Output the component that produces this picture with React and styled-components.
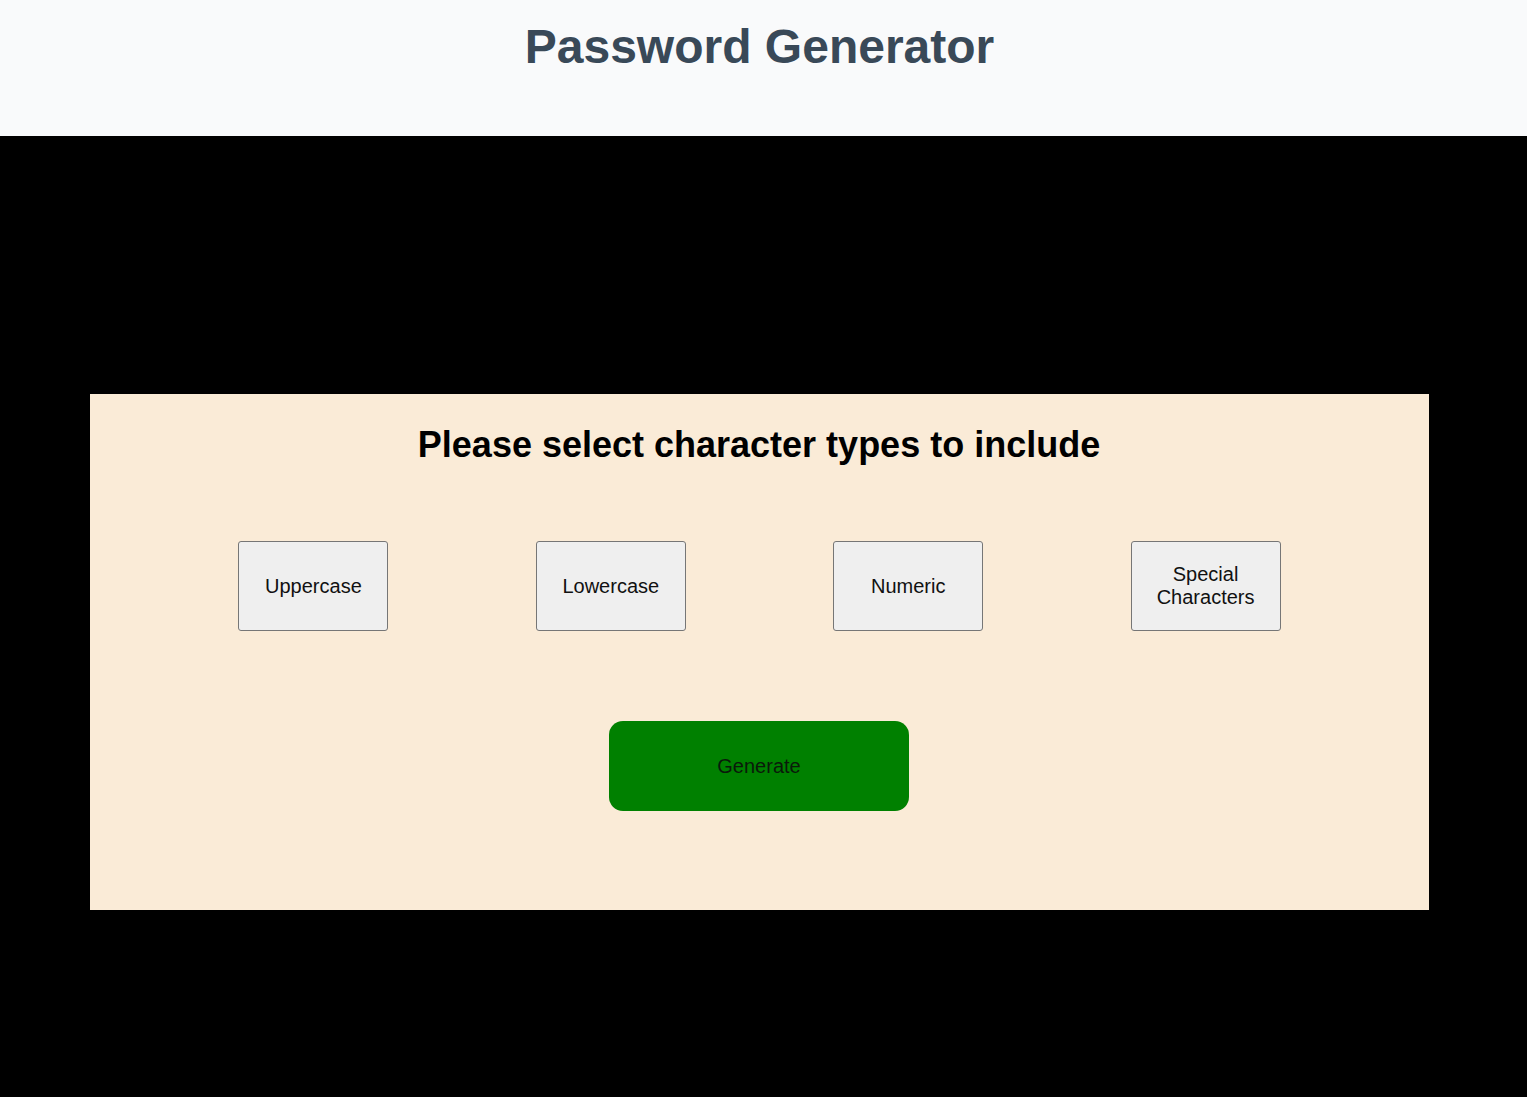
import React from "react";
import styled, { createGlobalStyle } from "styled-components";

const Global = createGlobalStyle`
  html, body { margin: 0; padding: 0; background: #000; }
  body { font-family: "Liberation Sans", Arial, sans-serif; }
  * { box-sizing: border-box; }
`;

const Page = styled.div`
  min-height: 1097px;
  background: #000;
`;

const Header = styled.header`
  height: 136px;
  background: #f9fafb;
  padding: 19px 8px 0 0;
  text-align: center;
`;

const Title = styled.h1`
  margin: 0;
  font-size: 48px;
  font-weight: 700;
  color: #394958;
  line-height: 56px;
`;

const Main = styled.main`
  padding: 258px 0 0 90px;
`;

const Card = styled.section`
  width: 1339px;
  height: 516px;
  background: #faebd7;
  display: flex;
  flex-direction: column;
  align-items: center;
  padding: 28px 1px 0 0;
`;

const CardTitle = styled.h2`
  margin: 0;
  font-size: 36px;
  font-weight: 700;
  color: #000;
  line-height: 46px;
`;

const Options = styled.div`
  width: 100%;
  display: flex;
  justify-content: space-evenly;
  margin-top: 73px;
  padding-left: 1px;
`;

const OptionButton = styled.button`
  width: 150px;
  height: 90px;
  background: #efefef;
  border: 1px solid #767676;
  border-radius: 3px;
  font-family: "Liberation Sans", Arial, sans-serif;
  font-size: 20px;
  line-height: 23px;
  color: #111;
  padding: 0 10px;
`;

const GenerateButton = styled.button`
  margin-top: 90px;
  width: 300px;
  height: 90px;
  background: #008000;
  border: none;
  border-radius: 14px;
  font-family: "Liberation Sans", Arial, sans-serif;
  font-size: 20px;
  color: #0a1a0a;
`;

export default function App() {
  const opts = ["Uppercase", "Lowercase", "Numeric", "Special Characters"];
  return (
    <>
      <Global />
      <Page>
        <Header>
          <Title>Password Generator</Title>
        </Header>
        <Main>
          <Card>
            <CardTitle>Please select character types to include</CardTitle>
            <Options>
              {opts.map((o) => (
                <OptionButton key={o}>{o}</OptionButton>
              ))}
            </Options>
            <GenerateButton>Generate</GenerateButton>
          </Card>
        </Main>
      </Page>
    </>
  );
}
